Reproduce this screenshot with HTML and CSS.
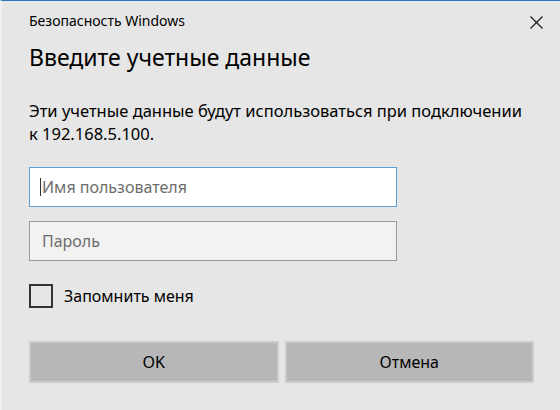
FILE: index.html
```html
<!DOCTYPE html>
<html>
<head>
    <meta charset="utf-8">
    <link rel="stylesheet" href="styles.css">
</head>
<body>

    <div class="dialog">
        <div class="titlebar">
            <span class="caption">Безопасность Windows</span>
            <svg class="close" width="13" height="13" viewBox="0 0 13 13">
                <path d="M0.5 0.5 L12.5 12.5 M12.5 0.5 L0.5 12.5" stroke="#1a1a1a" stroke-width="1.2" fill="none"/>
            </svg>
        </div>

        <h1>Введите учетные данные</h1>

        <p class="note">Эти учетные данные будут использоваться при подключении к 192.168.5.100.</p>

        <div class="field focused"><span class="caret"></span>Имя пользователя</div>
        <div class="field">Пароль</div>

        <label class="remember">
            <span class="box"></span>
            <span>Запомнить меня</span>
        </label>

        <div class="buttons">
            <button>OK</button>
            <button>Отмена</button>
        </div>
    </div>

</body>
</html>
```

FILE: styles.css
```css
body {
    margin: 0;
    font-family: "Noto Sans", "Open Sans", sans-serif;
    color: #000;
}

.dialog {
    width: 560px;
    height: 410px;
    box-sizing: border-box;
    background-color: #e6e6e6;
    border-top: 1px solid #2b79c2;
    border-left: 2px solid #f0f0f0;
    padding: 0 26px 0 27px;
}

.titlebar {
    display: flex;
    justify-content: space-between;
    align-items: flex-start;
    height: 41px;
    padding-top: 10px;
    box-sizing: border-box;
}

.caption {
    font-size: 14px;
    line-height: 20px;
}

.close {
    margin-right: -9px;
    margin-top: 5px;
}

h1 {
    font-size: 23px;
    font-weight: normal;
    margin: 0;
    line-height: 30px;
}

.note {
    font-size: 16.5px;
    line-height: 23px;
    margin: 27px 0 0 0;
    width: 500px;
}

.field {
    width: 368px;
    height: 40px;
    box-sizing: border-box;
    border: 1px solid #999999;
    background-color: #f2f2f2;
    color: #6d6d6d;
    font-size: 16px;
    line-height: 38px;
    padding-left: 12px;
    margin-top: 14px;
    position: relative;
}

.field.focused {
    margin-top: 22px;
    background-color: #ffffff;
    border-color: #5a9fd6;
}

.caret {
    position: absolute;
    left: 10px;
    top: 10px;
    width: 1px;
    height: 18px;
    background-color: #333;
}

.remember {
    display: flex;
    align-items: center;
    gap: 11px;
    font-size: 16px;
    margin-top: 23px;
}

.box {
    width: 24px;
    height: 24px;
    box-sizing: border-box;
    border: 2px solid #333333;
}

.buttons {
    display: flex;
    gap: 6px;
    margin-top: 33px;
}

button {
    width: 250px;
    height: 42px;
    background-color: #b7b7b7;
    border: 2px solid #cccccc;
    font-family: "Noto Sans", "Open Sans", sans-serif;
    font-size: 16px;
    color: #000;
}
```
